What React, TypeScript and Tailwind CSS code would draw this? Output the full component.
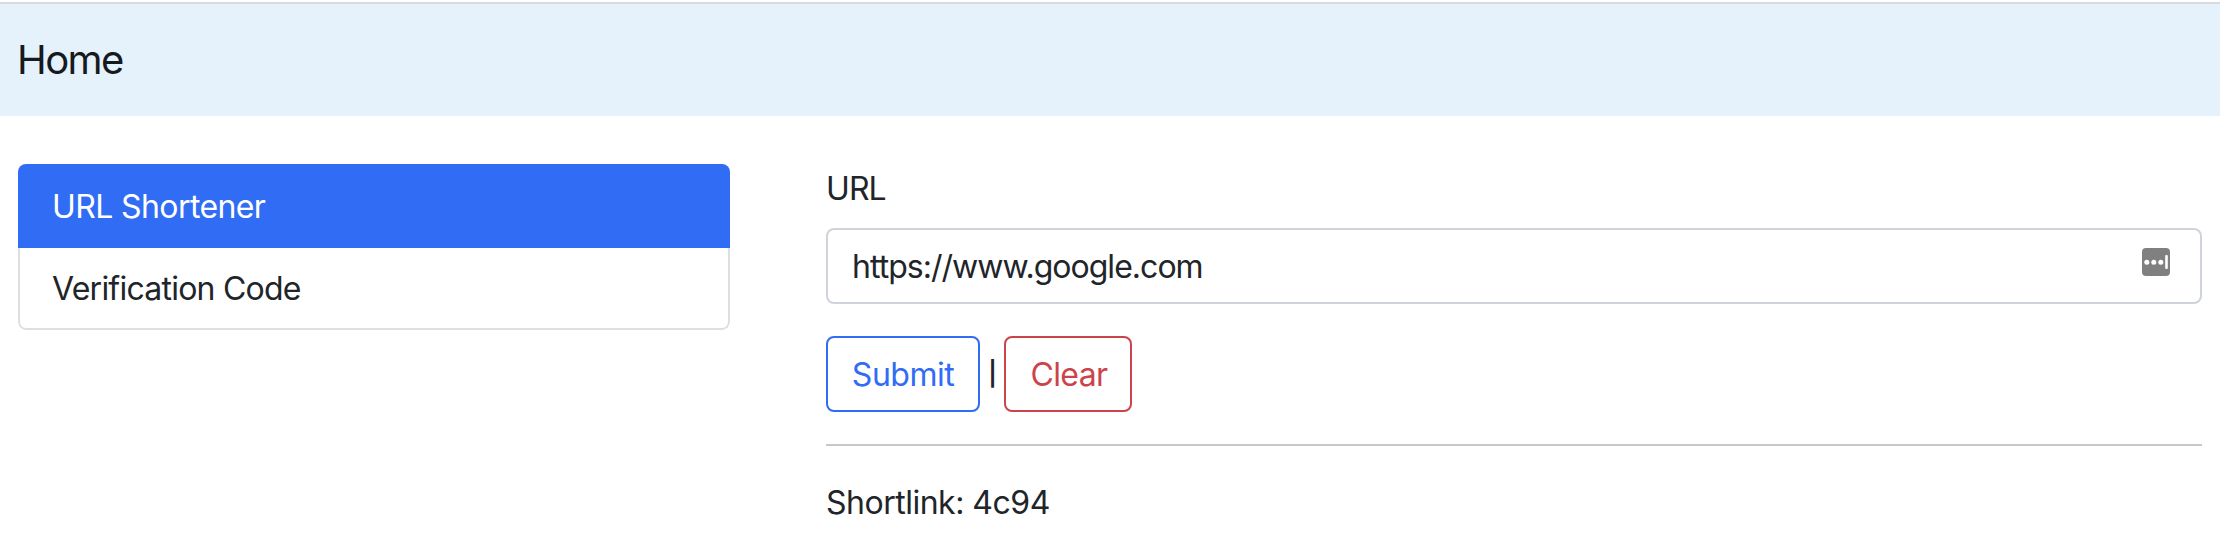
import React from "react";

function FieldIcon() {
  return (
    <svg width="28" height="28" viewBox="0 0 28 28" className="-mt-2 shrink-0">
      <rect width="28" height="28" rx="4" fill="#808080" />
      <circle cx="4.8" cy="14.2" r="2.5" fill="#fff" />
      <circle cx="11.8" cy="14.2" r="2.5" fill="#fff" />
      <circle cx="18.8" cy="14.2" r="2.5" fill="#fff" />
      <rect x="23.2" y="7" width="2.6" height="14" rx="1" fill="#fff" />
    </svg>
  );
}

export default function App() {
  return (
    <div className="h-[560px] w-full bg-white pt-0.5 font-['Inter',sans-serif] text-[32px] leading-[48px] text-[#212529]">
      <header className="flex h-[114px] items-center border-t-2 border-[#d9dadd] bg-[#e5f2fc] pl-[17px]">
        <h1 className="text-[40px] leading-[48px] tracking-[-1.6px] text-[#171a1d]">Home</h1>
      </header>
      <main className="flex gap-24 pt-12 pr-[18px] pl-[18px]">
        <nav className="h-[166px] w-[712px] shrink-0 overflow-hidden rounded-lg">
          <div className="flex h-[84px] items-center bg-[#316cf4] pt-0.5 pl-[34px] text-white">
            <span className="tracking-[-0.6px]">URL Shortener</span>
          </div>
          <div className="flex h-[82px] items-center rounded-b-lg border-2 border-t-0 border-[#dfdfdf] pt-0.5 pl-8">
            <span className="tracking-[-0.76px]">Verification Code</span>
          </div>
        </nav>
        <section className="flex min-w-0 flex-1 flex-col">
          <label className="mb-[15px] h-[49px] pt-px tracking-[-0.9px]">URL</label>
          <div className="flex h-[76px] items-center justify-between rounded-lg border-2 border-[#ced4da] pr-[30px] pl-6">
            <span className="pt-0.5 tracking-[-0.97px]">https://www.google.com</span>
            <FieldIcon />
          </div>
          <div className="mt-8 flex h-[76px] items-center">
            <button className="flex h-[76px] w-[154px] items-center justify-center rounded-lg border-2 border-[#316cf4] pt-0.5 text-[#316cf4]">
              <span className="tracking-[-0.5px]">Submit</span>
            </button>
            <span className="w-6 pl-px text-center text-[24px] font-semibold">|</span>
            <button className="flex h-[76px] w-32 items-center justify-center rounded-lg border-2 border-[#cb444a] pt-0.5 pl-0.5 text-[#cb444a]">
              <span className="tracking-[-0.6px]">Clear</span>
            </button>
          </div>
          <hr className="mt-8 h-0.5 border-0 bg-[#c7c8c9]" />
          <p className="mt-[33px] tracking-[-0.5px]">Shortlink: 4c94</p>
        </section>
      </main>
    </div>
  );
}
